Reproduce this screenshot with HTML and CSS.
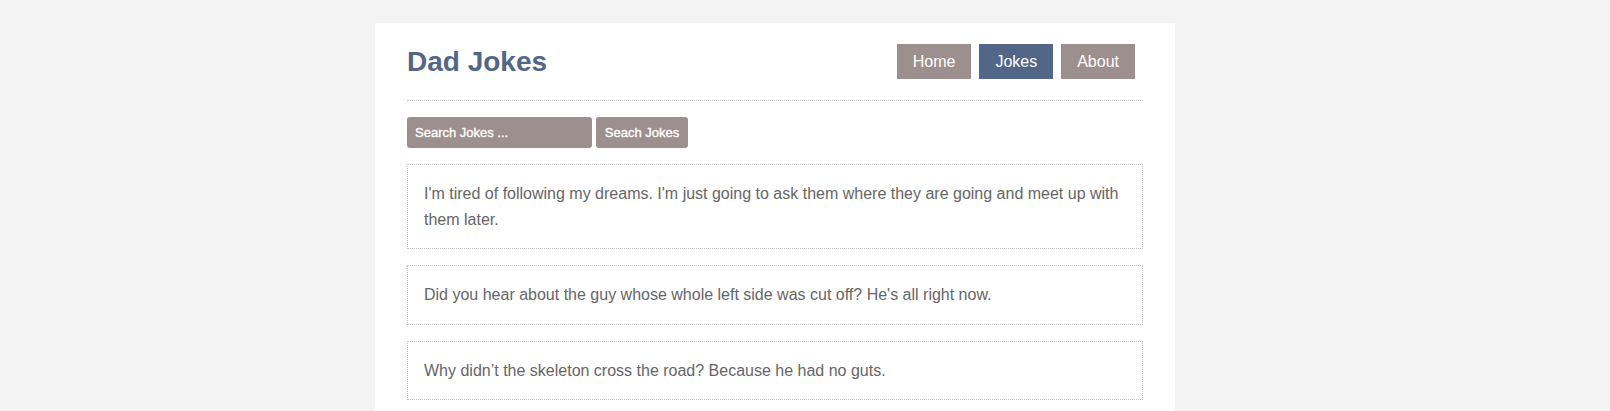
FILE: index.html
```html
<!DOCTYPE html>
<html lang="en">
<head>
<meta charset="utf-8">
<title>Dad Jokes</title>
<link rel="stylesheet" href="styles.css">
</head>
<body>
<div class="container">
  <header class="header">
    <h1 class="logo">Dad Jokes</h1>
    <nav class="nav">
      <a class="nav-link" href="#">Home</a>
      <a class="nav-link active" href="#">Jokes</a>
      <a class="nav-link" href="#">About</a>
    </nav>
  </header>
  <form class="search">
    <input class="search-input" type="text" placeholder="Search Jokes ...">
    <button class="search-btn" type="button">Seach Jokes</button>
  </form>
  <div class="jokes">
    <div class="joke">I'm tired of following my dreams. I'm just going to ask them where they are going and meet up with them later.</div>
    <div class="joke">Did you hear about the guy whose whole left side was cut off? He's all right now.</div>
    <div class="joke">Why didn’t the skeleton cross the road? Because he had no guts.</div>
  </div>
</div>
</body>
</html>
```
FILE: styles.css
```css
* { box-sizing: border-box; }
body {
  margin: 0;
  background: #f3f3f3;
  font-family: "Liberation Sans", Arial, sans-serif;
  color: #666;
}
.container {
  width: 800px;
  margin: 23px 0 0 375px;
  background: #fff;
  padding: 21px 32px 40px;
  min-height: 500px;
}
.header {
  display: flex;
  justify-content: space-between;
  align-items: center;
  padding-bottom: 21px;
  border-bottom: 1px dotted #c4c4c4;
}
.logo {
  margin: 0;
  font-size: 28px;
  font-weight: bold;
  color: #526687;
}
.nav { display: flex; }
.nav-link {
  display: block;
  height: 35px;
  line-height: 35px;
  padding: 0 16px;
  margin-right: 8px;
  background: #9d8f8d;
  color: #fff;
  text-decoration: none;
  font-size: 16px;
}
.nav-link.active { background: #526687; }
.search {
  display: flex;
  gap: 4px;
  margin: 16px 0;
}
.search-input, .search-btn {
  height: 31px;
  border: none;
  border-radius: 3px;
  background: #9d8f8d;
  color: #fff;
  font-family: "Liberation Sans", Arial, sans-serif;
  font-size: 13px;
  font-weight: normal;
  -webkit-text-stroke: 0.35px #fff;
  padding: 0 8px;
  white-space: nowrap;
}
.search-input { width: 185px; }
.search-input::placeholder { color: #fff; opacity: 1; }
.search-btn { width: 92px; padding: 0; }
.jokes { display: flex; flex-direction: column; gap: 16px; }
.joke {
  border: 1px dotted #c4c4c4;
  padding: 16px;
  font-size: 16px;
  line-height: 1.6;
  color: #666;
}
```
